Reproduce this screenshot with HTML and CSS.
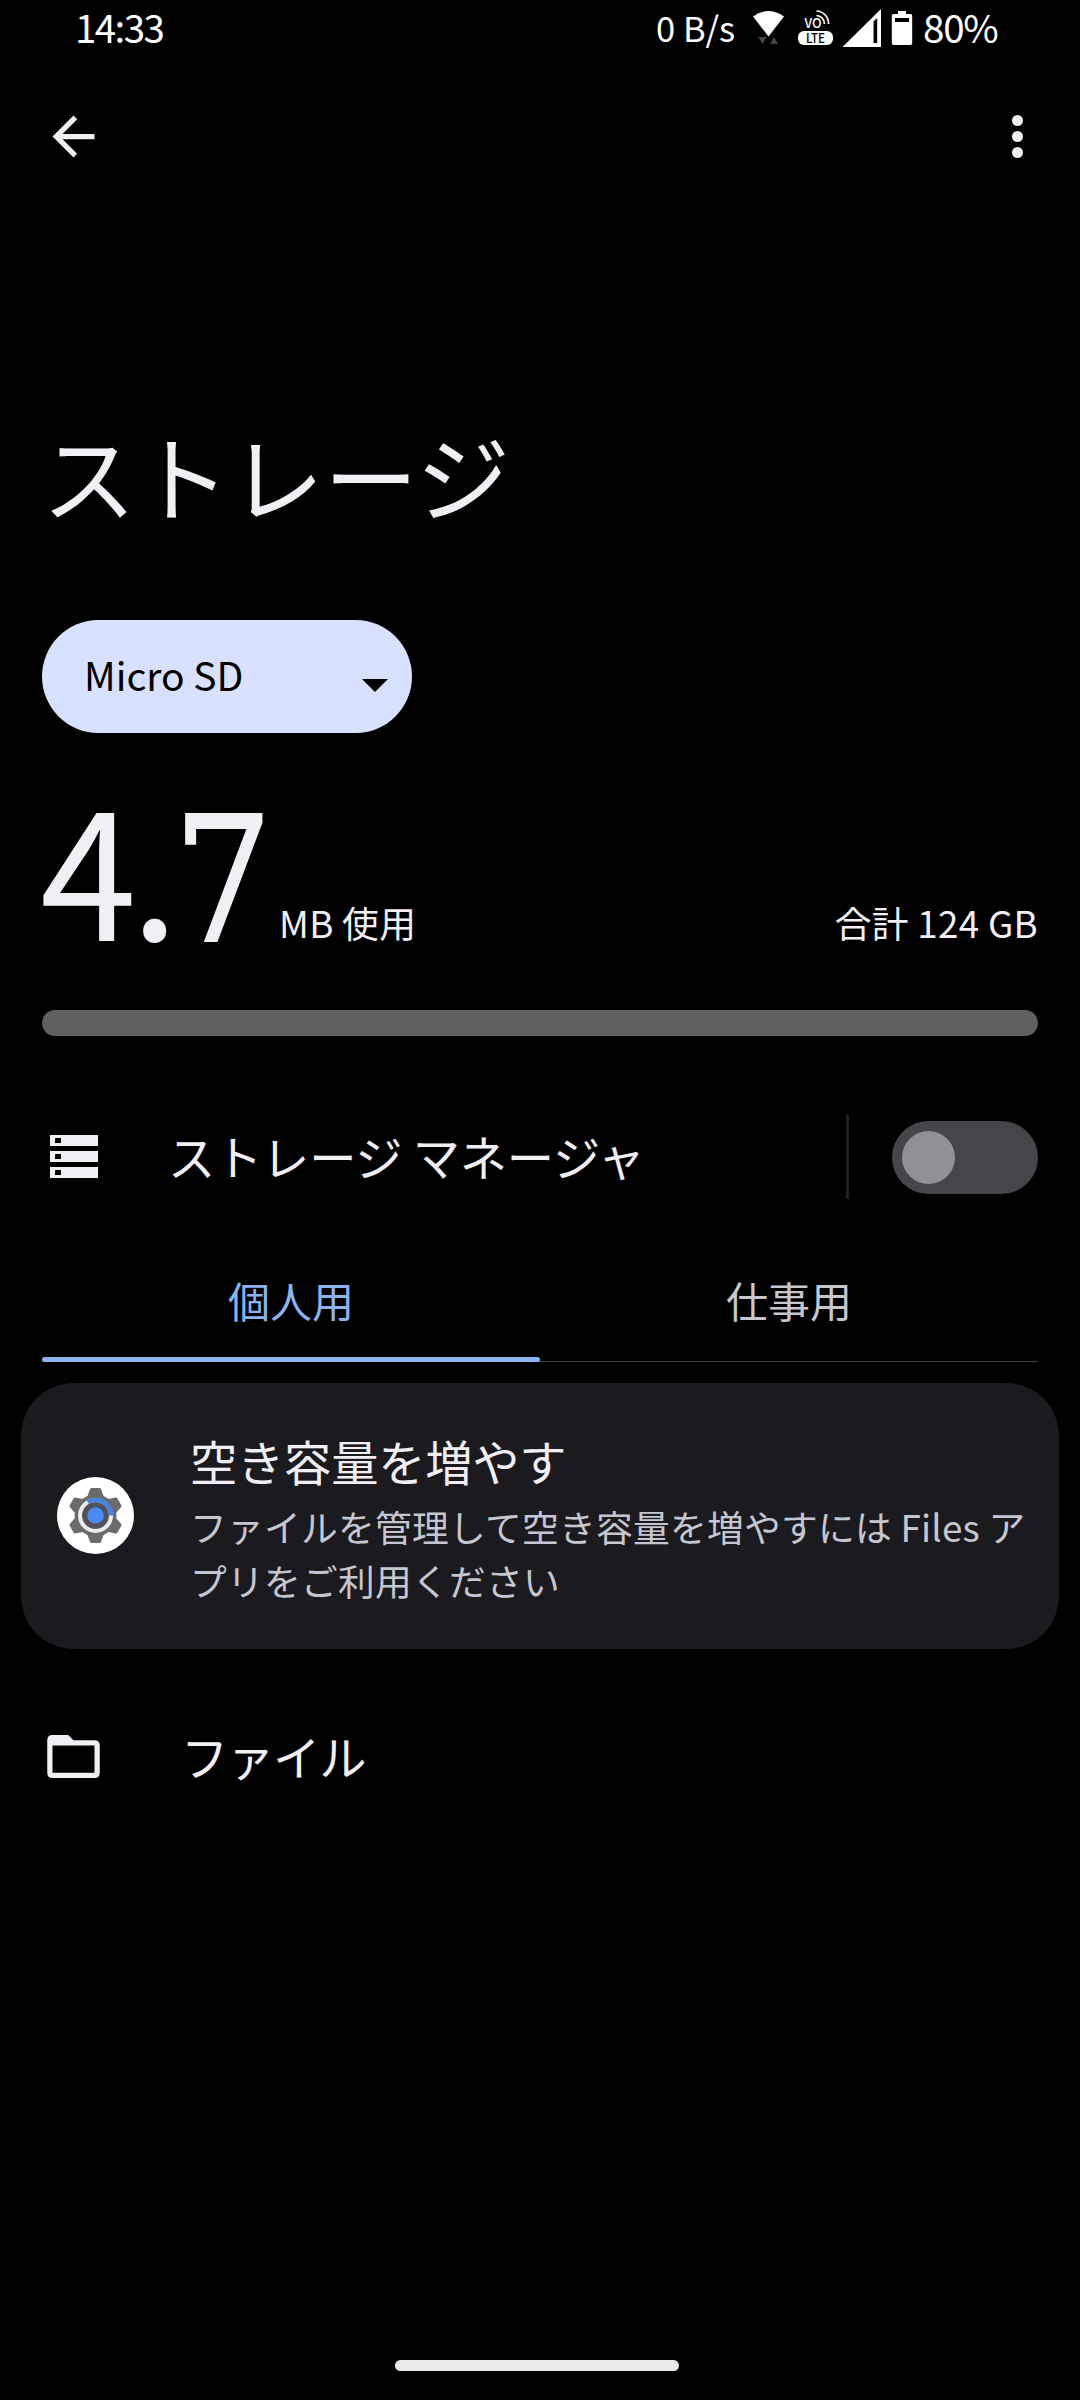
FILE: index.html
```html
<!DOCTYPE html>
<html lang="ja">
<head>
<meta charset="utf-8">
<title>ストレージ</title>
<link rel="stylesheet" href="styles.css">
</head>
<body>
<div class="screen">
  <header class="status">
    <span class="clock">14:33</span>
    <span class="net">0 B/s</span>
    <svg class="status-icons" width="162" height="56" viewBox="751 0 162 56" fill="#fff">
      <path d="M753 16.500Q768.500 5.500 784 16.500L768.500 36.500Z"/>
      <path d="M758.500 37h8l-4 7zM770 44h8l-4-7z" fill="#484848"/>
      <text class="vo" x="804.500" y="28" textLength="17" lengthAdjust="spacingAndGlyphs">VO</text>
      <g fill="none" stroke="#fff" stroke-width="1.700">
        <path d="M816.500 15.500a8.500 8.500 0 0 1 8 8.500M816.500 11a12.500 12.500 0 0 1 12 13"/>
      </g>
      <rect x="798" y="31" width="35" height="14" rx="6"/>
      <text class="lte" x="806" y="42.500" textLength="19" lengthAdjust="spacingAndGlyphs">LTE</text>
      <path fill-rule="evenodd" d="M881 9v38H842.500ZM877.200 18l-3.700 3.500V43h3.700z"/>
      <path fill-rule="evenodd" d="M898 11h8v3h4.500q1.700 0 1.700 1.700v27.500q0 1.700-1.700 1.700h-17q-1.700 0-1.700-1.700V15.700q0-1.700 1.700-1.700h4.500zM895 18v4h14v-4z"/>
    </svg>
    <span class="battery">80%</span>
  </header>

  <nav class="toolbar">
    <svg class="icon" viewBox="0 0 24 24"><path d="M20 11H7.830l5.590-5.590L12 4l-8 8 8 8 1.410-1.410L7.830 13H20v-2z"/></svg>
    <svg class="icon" viewBox="0 0 24 24"><circle cx="12" cy="5.900" r="2.100"/><circle cx="12" cy="12" r="2.100"/><circle cx="12" cy="18.100" r="2.100"/></svg>
  </nav>

  <h1 class="title">ストレージ</h1>

  <button class="spinner">
    <span class="spinner-label">Micro SD</span>
    <svg width="26" height="13" viewBox="0 0 26 13"><path d="M0 0h26L13 13z"/></svg>
  </button>

  <section class="usage">
    <span class="amount">4.<span class="slab">7</span></span>
    <span class="unit">MB 使用</span>
    <span class="total">合計 124 GB</span>
  </section>
  <div class="meter"></div>

  <section class="manager">
    <svg width="48" height="43" viewBox="0 0 48 43"><path fill-rule="evenodd" d="M0 0h48v11H0zM5 3v5h6V3zM0 16h48v11H0zM5 19v5h6v-5zM0 32h48v11H0zM5 35v5h6v-5z"/></svg>
    <span class="row-label">ストレージ マネージャ</span>
    <span class="divider"></span>
    <span class="toggle"><span class="knob"></span></span>
  </section>

  <div class="tabs">
    <span class="tab active">個人用</span>
    <span class="tab">仕事用</span>
  </div>

  <section class="card">
    <svg class="gear" width="77" height="77" viewBox="-38.500 -38.500 77 77">
      <circle r="38.500" fill="#fff"/>
      <g fill="#6b6b6b">
        <circle r="21"/>
        <path id="tooth" d="M-8.500-18L-5.500-26.500Q-5-27.500-4-27.500H4Q5-27.500 5.500-26.500L8.500-18V0H-8.500z"/>
        <use href="#tooth" transform="rotate(60)"/>
        <use href="#tooth" transform="rotate(120)"/>
        <use href="#tooth" transform="rotate(180)"/>
        <use href="#tooth" transform="rotate(240)"/>
        <use href="#tooth" transform="rotate(300)"/>
      </g>
      <circle r="15.500" fill="#5c5c5e" stroke="#ececec" stroke-width="4"/>
      <path d="M-7.750-13.420A15.500 15.500 0 0 1 15.500 0" fill="none" stroke="#4683e4" stroke-width="4.500"/>
      <circle r="12.500" fill="#505359"/>
      <circle r="8.300" fill="#4a8af4"/>
    </svg>
    <div class="card-text">
      <div class="card-title">空き容量を増やす</div>
      <div class="card-summary">ファイルを管理して空き容量を増やすには Files ア<br>プリをご利用ください</div>
    </div>
  </section>

  <section class="file-row">
    <svg class="icon" viewBox="0 0 24 24"><path fill-rule="evenodd" d="M4 3.800h6l2 2h8q2 0 2 2V18.200q0 2-2 2H4q-2 0-2-2V5.800q0-2 2-2zM4 7.800v10.400h16V7.800z"/></svg>
    <span class="row-label">ファイル</span>
  </section>

  <div class="gesture"></div>
</div>
</body>
</html>
```
FILE: styles.css
```css
* {
  box-sizing: border-box;
}

body {
  margin: 0;
  background: #000;
  color: #f1eff4;
  font-family: "Noto Sans CJK JP", sans-serif;
}

.screen {
  display: flex;
  flex-direction: column;
  width: 1080px;
  height: 2400px;
  background: #000;
}

svg {
  display: block;
  flex: none;
  fill: #f1eff4;
}

span {
  white-space: nowrap;
}

.icon {
  width: 63px;
  height: 63px;
}

.status {
  display: flex;
  align-items: center;
  height: 56px;
  padding-left: 75px;
  color: #fff;
  line-height: 46px;
}

.status-icons {
  fill: #fff;
}

.clock {
  width: 581px;
  padding-bottom: 4px;
  font-size: 38.500px;
  letter-spacing: -1.600px;
}

.net {
  width: 95px;
  padding-bottom: 3px;
  font-size: 34.500px;
}

.battery {
  margin-left: 10px;
  padding-bottom: 4px;
  font-size: 38.500px;
  letter-spacing: -1.200px;
}

.vo {
  font: 500 13.500px "Noto Sans CJK JP", sans-serif;
}

.lte {
  fill: #000;
  font: 500 13px "Noto Sans CJK JP", sans-serif;
}

.toolbar {
  display: flex;
  justify-content: space-between;
  height: 63px;
  margin-top: 49px;
  padding: 0 31px 0 42px;
}

.title {
  height: 140px;
  margin: 236px 0 0 42px;
  font-size: 94px;
  font-weight: 400;
  line-height: 140px;
}

.spinner {
  display: flex;
  align-items: center;
  justify-content: space-between;
  width: 370px;
  height: 113px;
  margin: 76px 0 0 42px;
  padding: 0 24px 0 42px;
  border: 0;
  border-radius: 57px;
  background: #d8e1ff;
  color: #000;
  font: 400 39px "Noto Sans CJK JP", sans-serif;
}

.spinner-label {
  padding-bottom: 6px;
}

.spinner svg {
  margin-top: 18px;
  fill: #000;
}

.usage {
  display: flex;
  align-items: baseline;
  height: 277px;
  padding: 0 42px 0 40px;
  font-size: 36.750px;
  letter-spacing: 0.300px;
}

.amount {
  width: 239px;
  font-size: 174px;
  letter-spacing: -6px;
  line-height: 264px;
}

.slab {
  font-family: "DejaVu Serif Condensed", "DejaVu Serif", serif;
  font-stretch: condensed;
  line-height: 1;
  -webkit-text-stroke: 2px #f1eff4;
}

.unit,
.total {
  transform: translateY(-3px);
}

.total {
  margin-left: auto;
}

.meter {
  height: 26px;
  margin: 0 42px;
  border-radius: 13px;
  background: #606062;
}

.manager {
  display: flex;
  align-items: center;
  height: 84px;
  margin-top: 79px;
  padding: 0 42px 0 50px;
}

.manager svg {
  margin-bottom: 2px;
}

.row-label {
  font-size: 47.250px;
  line-height: 84px;
}

.manager .row-label {
  width: 678px;
  margin-left: 70px;
  padding-bottom: 2px;
  letter-spacing: -0.200px;
}

.divider {
  width: 3px;
  height: 84px;
  background: #222224;
}

.toggle {
  width: 146px;
  height: 73px;
  margin-left: auto;
  padding: 10px;
  border-radius: 37px;
  background: #464549;
}

.knob {
  display: block;
  width: 53px;
  height: 53px;
  border-radius: 50%;
  background: #929095;
}

.tabs {
  display: flex;
  height: 126px;
  margin: 37px 42px 0;
  background: linear-gradient(#444448, #444448) 0 125px / 100% 1px no-repeat;
}

.tab {
  position: relative;
  flex: 1;
  height: 126px;
  color: #c6c6cd;
  font-size: 42px;
  line-height: 128px;
  text-align: center;
}

.tab.active {
  color: #8ab4f0;
}

.tab.active::after {
  position: absolute;
  right: 0;
  bottom: 0;
  left: 0;
  height: 5px;
  border-radius: 2.500px;
  background: #8ab4f0;
  content: "";
}

.card {
  display: flex;
  height: 266px;
  margin: 21px 21px 0;
  padding: 0 0 0 36px;
  border-radius: 53px;
  background: #1b1b1f;
}

.gear {
  margin-top: 94px;
}

.card-text {
  margin: 43px 0 0 56px;
}

.card-title {
  font-size: 47.250px;
  letter-spacing: -0.200px;
  line-height: 70px;
}

.card-summary {
  margin-top: 3px;
  color: #c5c6d0;
  font-size: 36.750px;
  letter-spacing: 0.250px;
  line-height: 54px;
  white-space: nowrap;
}

.file-row {
  display: flex;
  align-items: center;
  height: 84px;
  margin-top: 65px;
  padding-left: 42px;
}

.file-row .row-label {
  margin-left: 76px;
  padding-bottom: 1px;
  letter-spacing: -1.200px;
}

.gesture {
  width: 284px;
  height: 11px;
  margin: auto 0 29px 395px;
  border-radius: 6px;
  background: #ebebeb;
}
```
